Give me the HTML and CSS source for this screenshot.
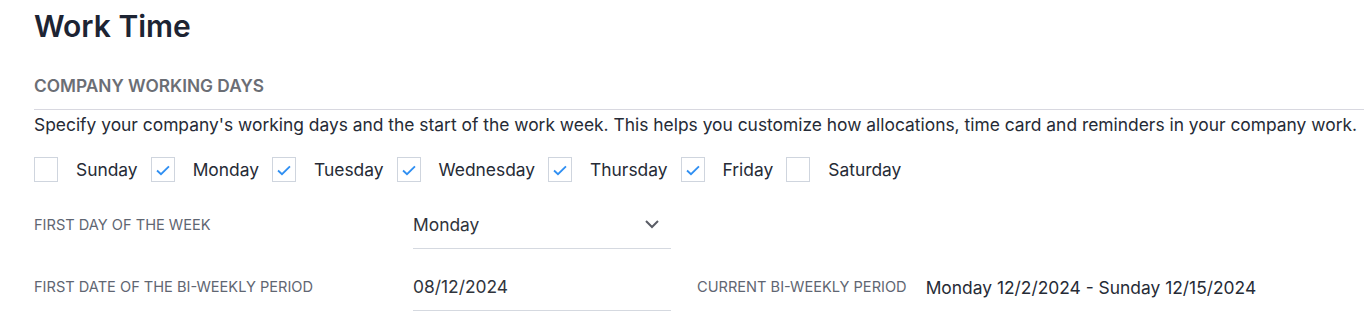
FILE: index.html
```html
<!DOCTYPE html>
<html>
<head>
<meta charset="utf-8">
<link rel="stylesheet" href="styles.css">
</head>
<body>
<div class="page">
  <h1 class="title">Work Time</h1>
  <h2 class="section">COMPANY WORKING DAYS</h2>
  <p class="desc">Specify your company's working days and the start of the work week. This helps you customize how allocations, time card and reminders in your company work.</p>
  <div class="days">
    <label class="day"><span class="box"></span><span class="dname">Sunday</span></label>
    <label class="day"><span class="box"><svg viewBox="0 0 24 24" width="24" height="24"><path d="M5.5 12.5 L9.8 16.5 L18.5 8" fill="none" stroke="#2f8ff2" stroke-width="2"/></svg></span><span class="dname">Monday</span></label>
    <label class="day"><span class="box"><svg viewBox="0 0 24 24" width="24" height="24"><path d="M5.5 12.5 L9.8 16.5 L18.5 8" fill="none" stroke="#2f8ff2" stroke-width="2"/></svg></span><span class="dname">Tuesday</span></label>
    <label class="day"><span class="box"><svg viewBox="0 0 24 24" width="24" height="24"><path d="M5.5 12.5 L9.8 16.5 L18.5 8" fill="none" stroke="#2f8ff2" stroke-width="2"/></svg></span><span class="dname">Wednesday</span></label>
    <label class="day"><span class="box"><svg viewBox="0 0 24 24" width="24" height="24"><path d="M5.5 12.5 L9.8 16.5 L18.5 8" fill="none" stroke="#2f8ff2" stroke-width="2"/></svg></span><span class="dname">Thursday</span></label>
    <label class="day"><span class="box"><svg viewBox="0 0 24 24" width="24" height="24"><path d="M5.5 12.5 L9.8 16.5 L18.5 8" fill="none" stroke="#2f8ff2" stroke-width="2"/></svg></span><span class="dname">Friday</span></label>
    <label class="day"><span class="box"></span><span class="dname">Saturday</span></label>
  </div>
  <div class="row row1">
    <div class="flabel">FIRST DAY OF THE WEEK</div>
    <div class="field">
      <span class="fval">Monday</span>
      <svg class="chev" viewBox="0 0 16 10" width="16" height="10"><path d="M2 2 L8 8 L14 2" fill="none" stroke="#5a5d66" stroke-width="2"/></svg>
    </div>
  </div>
  <div class="row row2">
    <div class="flabel">FIRST DATE OF THE BI-WEEKLY PERIOD</div>
    <div class="field">
      <span class="fval">08/12/2024</span>
    </div>
    <div class="flabel cur">CURRENT BI-WEEKLY PERIOD</div>
    <div class="curval">Monday 12/2/2024 - Sunday 12/15/2024</div>
  </div>
</div>
</body>
</html>
```
FILE: styles.css
```css
html, body {
  margin: 0;
  padding: 0;
  background: #ffffff;
}
body {
  font-family: Inter, "Noto Sans", sans-serif;
  color: #262b36;
}
.page {
  padding: 8px 0 0 34px;
}
.title {
  margin: 0;
  font-size: 30px;
  line-height: 36px;
  font-weight: 600;
  color: #1d2433;
}
.section {
  margin: 31px 0 0 0;
  font-size: 17.3px;
  line-height: 22px;
  font-weight: 600;
  color: #6b6e75;
  padding-bottom: 12px;
  border-bottom: 1px solid #d8d8e0;
}
.desc {
  margin: 4px 0 0 0;
  font-size: 17.4px;
  line-height: 22px;
  color: #262b36;
  white-space: nowrap;
}
.days {
  display: flex;
  align-items: center;
  margin-top: 21px;
  gap: 13px;
}
.day {
  display: flex;
  align-items: center;
}
.box {
  box-sizing: border-box;
  width: 24px;
  height: 25px;
  border: 1px solid #cfd5de;
  margin-right: 18px;
  display: flex;
  align-items: center;
  justify-content: center;
}
.box svg {
  display: block;
}
.dname {
  font-size: 17.4px;
  line-height: 22px;
  color: #262b36;
}
.row {
  display: flex;
  align-items: center;
}
.row1 {
  margin-top: 19px;
}
.row2 {
  margin-top: 14px;
}
.flabel {
  width: 379px;
  font-size: 14.6px;
  color: #5f6672;
  flex-shrink: 0;
}
.field {
  box-sizing: border-box;
  width: 258px;
  height: 48px;
  border-bottom: 1px solid #d5d9e0;
  display: flex;
  align-items: center;
  justify-content: space-between;
  padding-right: 11px;
}
.fval {
  font-size: 17.4px;
  color: #30343c;
}
.chev {
  display: block;
  margin-top: -2px;
}
.flabel.cur {
  width: auto;
  margin-left: 26px;
  margin-right: 19px;
}
.curval {
  font-size: 17.4px;
  color: #262b36;
}
```
